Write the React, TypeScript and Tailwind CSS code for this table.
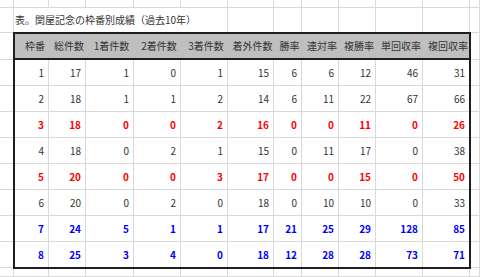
const heads = ["枠番", "総件数", "1着件数", "2着件数", "3着件数", "着外件数", "勝率", "連対率", "複勝率", "単回収率", "複回収率"];

const rows: { tone: "normal" | "red" | "blue"; v: number[] }[] = [
  { tone: "normal", v: [1, 17, 1, 0, 1, 15, 6, 6, 12, 46, 31] },
  { tone: "normal", v: [2, 18, 1, 1, 2, 14, 6, 11, 22, 67, 66] },
  { tone: "red", v: [3, 18, 0, 0, 2, 16, 0, 0, 11, 0, 26] },
  { tone: "normal", v: [4, 18, 0, 2, 1, 15, 0, 11, 17, 0, 38] },
  { tone: "red", v: [5, 20, 0, 0, 3, 17, 0, 0, 15, 0, 50] },
  { tone: "normal", v: [6, 20, 0, 2, 0, 18, 0, 10, 10, 0, 33] },
  { tone: "blue", v: [7, 24, 5, 1, 1, 17, 21, 25, 29, 128, 85] },
  { tone: "blue", v: [8, 25, 3, 4, 0, 18, 12, 28, 28, 73, 71] },
];

const toneClass = {
  normal: "text-[#333333]",
  red: "text-[#ff0000] font-bold",
  blue: "text-[#0000ff] font-bold",
};

// empty spreadsheet cell with its gridlines
function Cell() {
  return <div className="border-r border-b border-[#d9d9d9]" />;
}

export default function App() {
  return (
    <div className="w-[480px] h-[277px] overflow-hidden bg-white font-['Noto_Sans_CJK_JP',sans-serif] text-[#333333]">
      <div className="grid h-full grid-cols-[14px_35px_37px_48px_47px_47px_46px_28px_37px_37px_47px_47px_1fr] grid-rows-[8px_25px_27px_repeat(8,26px)_1fr]">
        {/* top row */}
        {Array.from({ length: 13 }).map((_, i) => (
          <Cell key={"top" + i} />
        ))}

        {/* title row */}
        <Cell />
        <div className="col-span-5 flex items-center pl-px border-r border-b border-[#d9d9d9] text-[10px] leading-none whitespace-nowrap [text-spacing-trim:space-all]">
          表。関屋記念の枠番別成績（過去10年）
        </div>
        {Array.from({ length: 7 }).map((_, i) => (
          <Cell key={"title" + i} />
        ))}

        {/* table */}
        <div className="relative z-10 col-start-2 col-span-11 row-start-3 row-span-9 grid grid-cols-subgrid grid-rows-subgrid outline-2 outline-solid -outline-offset-1 outline-[#1f1f1f]">
          {heads.map((h, i) => (
            <div
              key={h}
              className={
                "flex items-center justify-center bg-[#bfbfbf] border-b-2 border-[#1f1f1f] text-[10px] leading-none whitespace-nowrap " +
                (i === 0 ? "pl-[7px]" : "pl-[3px]")
              }
            >
              {h}
            </div>
          ))}
          {rows.map((r, ri) =>
            r.v.map((n, ci) => (
              <div
                key={ri + "-" + ci}
                className={"flex items-center justify-end pr-[4px] border-r border-b border-[#d9d9d9] text-[10px] leading-none " + toneClass[r.tone]}
              >
                {n}
              </div>
            ))
          )}
        </div>

        {/* column A and M beside the table */}
        {Array.from({ length: 18 }).map((_, i) => (
          <Cell key={"side" + i} />
        ))}

        {/* bottom row */}
        {Array.from({ length: 13 }).map((_, i) => (
          <Cell key={"bot" + i} />
        ))}
      </div>
    </div>
  );
}
